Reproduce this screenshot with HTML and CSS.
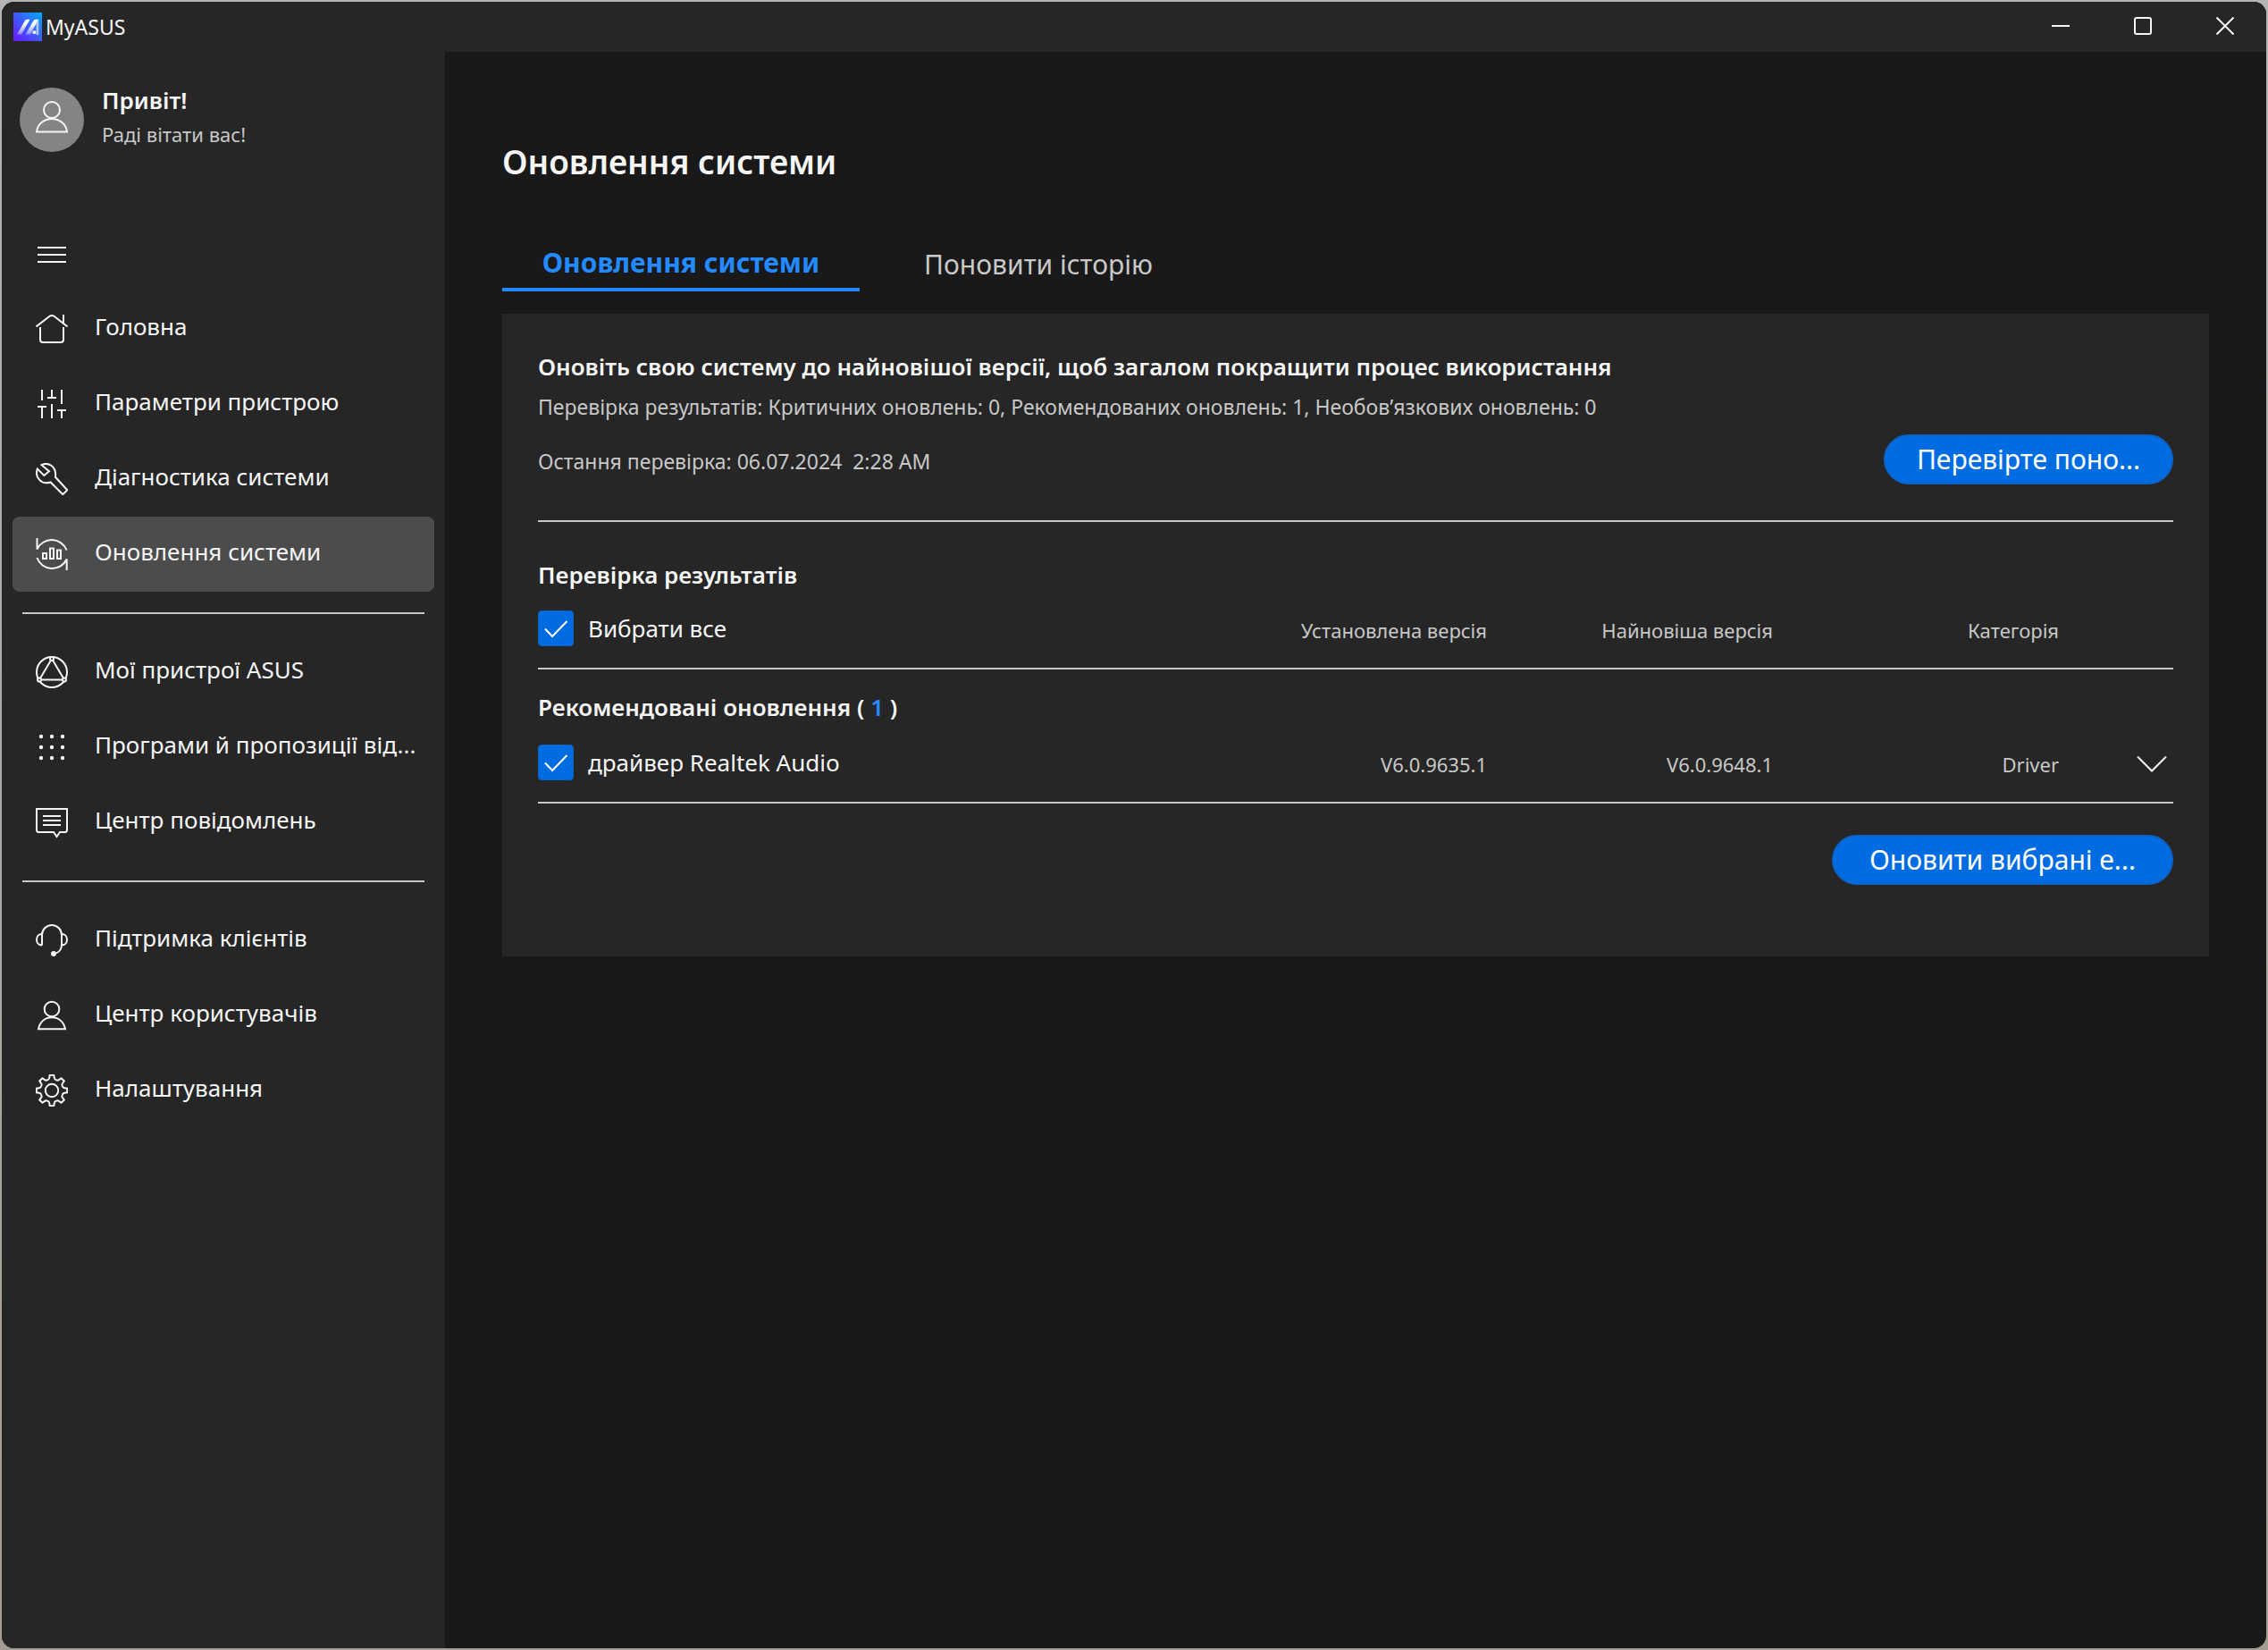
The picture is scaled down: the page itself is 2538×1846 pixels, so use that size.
FILE: index.html
```html
<!DOCTYPE html>
<html lang="uk">
<head>
<meta charset="utf-8">
<meta name="viewport" content="width=device-width, initial-scale=1">
<title>MyASUS</title>
<link rel="stylesheet" href="styles.css">
</head>
<body>
<div class="window">
  <header class="titlebar">
    <svg class="logo" viewBox="0 0 32 32" aria-hidden="true">
      <defs>
        <linearGradient id="logo-bg" x1="0" y1="1" x2="1" y2="0">
          <stop offset="0" stop-color="#6a14ff"/>
          <stop offset="0.5" stop-color="#3f5cff"/>
          <stop offset="1" stop-color="#00acff"/>
        </linearGradient>
        <linearGradient id="logo-stroke" x1="0" y1="1" x2="0" y2="0">
          <stop offset="0" stop-color="#fff" stop-opacity="0.35"/>
          <stop offset="0.7" stop-color="#fff"/>
        </linearGradient>
      </defs>
      <rect width="32" height="32" fill="url(#logo-bg)"/>
      <path d="M4 24.5 13 9Q13.800 7.700 15.200 7.700H18.500L9 24.500Z" fill="url(#logo-stroke)"/>
      <path d="M13.500 24.500 22.500 9Q23.300 7.700 24.800 7.700H28L19 24.500Z" fill="url(#logo-stroke)"/>
      <path d="M28.300 7.700V25H25.500V12.500Z" fill="#fff" fill-opacity="0.6"/>
      <circle cx="23.400" cy="22.200" r="1.900" fill="#fff"/>
    </svg>
    <span class="app-name">MyASUS</span>
    <div class="window-controls">
      <button class="window-button" type="button" aria-label="Згорнути">
        <svg class="window-icon" viewBox="0 0 20 20"><path d="M0 10H20"/></svg>
      </button>
      <button class="window-button" type="button" aria-label="Розгорнути">
        <svg class="window-icon" viewBox="0 0 20 20"><rect x="1" y="1" width="18" height="18" rx="2"/></svg>
      </button>
      <button class="window-button" type="button" aria-label="Закрити">
        <svg class="window-icon" viewBox="0 0 20 20"><path d="M.5.5 19.500 19.500M19.500.5.5 19.500"/></svg>
      </button>
    </div>
  </header>

  <div class="body">
    <aside class="sidebar">
      <div class="profile">
        <span class="avatar">
          <svg class="icon" viewBox="0 0 36 36" aria-hidden="true"><circle cx="18" cy="10" r="9"/><path d="M1 34.500C2 26 9 20 18 20S34 26 35 34.500Z"/></svg>
        </span>
        <div class="greeting">
          <p class="greeting-title">Привіт!</p>
          <p class="greeting-text">Раді вітати вас!</p>
        </div>
      </div>

      <button class="menu-button" type="button" aria-label="Меню">
        <svg class="menu-icon" viewBox="0 0 32 18"><path d="M0 1H32M0 9H32M0 17H32"/></svg>
      </button>

      <nav class="nav">
        <ul class="nav-group">
          <li><a class="nav-item" href="#home">
            <svg class="icon" viewBox="0 0 36 36"><path d="M.5 15.500 15.500 3.800Q18 2 20.500 3.800L35.500 15.500M31 2V12M5 16V30Q5 33 8 33H28Q31 33 31 30V16"/></svg>
            <span class="nav-label">Головна</span></a></li>
          <li><a class="nav-item" href="#device">
            <svg class="icon" viewBox="0 0 36 36"><path d="M7 2V14M2 21H12M7 21V34M18 2V11M13 11H23M18 18V34M29 2V18M24 25H34M29 25V34"/></svg>
            <span class="nav-label">Параметри пристрою</span></a></li>
          <li><a class="nav-item" href="#diagnostics">
            <svg class="icon" viewBox="0 0 36 36"><path d="M6.500 2.200C13-1.200 23.500 2.500 22 15.800L35.300 30.200 30.300 35.200 16.500 21.500C6.500 25-1.500 16 1.800 6.500L9.300 14 15 9.300Z"/></svg>
            <span class="nav-label">Діагностика системи</span></a></li>
          <li><a class="nav-item nav-item-active" href="#update" aria-current="page">
            <svg class="icon" viewBox="0 0 36 36"><path d="M1.500 0V12.500A18 18 0 0 1 34.600 13.500M34.700 36V23.500A18 18 0 0 1 1.400 22M8 17H12V23H8ZM16 11.500H20V23H16ZM24 13.500H28V23H24Z"/></svg>
            <span class="nav-label">Оновлення системи</span></a></li>
        </ul>
        <ul class="nav-group">
          <li><a class="nav-item" href="#devices">
            <svg class="icon" viewBox="0 0 36 36"><circle cx="18" cy="18" r="17"/><path d="M18 3 4 26.500H32Z"/><g class="node"><circle cx="18" cy="3" r="2"/><circle cx="4" cy="26.500" r="2"/><circle cx="32" cy="26.500" r="2"/></g></svg>
            <span class="nav-label">Мої пристрої ASUS</span></a></li>
          <li><a class="nav-item" href="#apps">
            <svg class="icon icon-solid" viewBox="0 0 36 36"><circle cx="6" cy="6" r="2.200"/><circle cx="18" cy="6" r="2.200"/><circle cx="30" cy="6" r="2.200"/><circle cx="6" cy="18" r="2.200"/><circle cx="18" cy="18" r="2.200"/><circle cx="30" cy="18" r="2.200"/><circle cx="6" cy="30" r="2.200"/><circle cx="18" cy="30" r="2.200"/><circle cx="30" cy="30" r="2.200"/></svg>
            <span class="nav-label">Програми й пропозиції від...</span></a></li>
          <li><a class="nav-item" href="#messages">
            <svg class="icon" viewBox="0 0 36 36"><path d="M1 3H35V26.500Q35 29 32.500 29H27L23.500 34 20 29H3.500Q1 29 1 26.500ZM8 11H28M8 16H28M8 21H28"/></svg>
            <span class="nav-label">Центр повідомлень</span></a></li>
        </ul>
        <ul class="nav-group">
          <li><a class="nav-item" href="#support">
            <svg class="icon" viewBox="0 0 36 36"><path d="M7 23.500V12A11 11 0 0 1 29 12V23C29 28 26 32 21 33M7 11C3 11 1 14 1 17.200S3 23.400 7 23.400M29 11C33 11 35 14 35 17.200S33 23.400 29 23.400"/><circle class="mic" cx="20" cy="33" r="2"/></svg>
            <span class="nav-label">Підтримка клієнтів</span></a></li>
          <li><a class="nav-item" href="#account">
            <svg class="icon" viewBox="0 0 36 36"><circle cx="18" cy="11" r="8.300"/><path d="M3 33.300C4.500 25.500 10 20.300 18 20.300S31.500 25.500 33 33.300Z"/></svg>
            <span class="nav-label">Центр користувачів</span></a></li>
          <li><a class="nav-item" href="#settings">
            <svg class="icon" viewBox="-18 -18 36 36">
              <defs><path id="tooth" d="M-4.900-11.830Q-3-12.300-2.800-14L-2.300-17.200H2.300L2.800-14Q3-12.300 4.900-11.830"/></defs>
              <use href="#tooth"/><use href="#tooth" transform="rotate(45)"/><use href="#tooth" transform="rotate(90)"/><use href="#tooth" transform="rotate(135)"/><use href="#tooth" transform="rotate(180)"/><use href="#tooth" transform="rotate(225)"/><use href="#tooth" transform="rotate(270)"/><use href="#tooth" transform="rotate(315)"/>
              <circle r="7.200"/>
            </svg>
            <span class="nav-label">Налаштування</span></a></li>
        </ul>
      </nav>
    </aside>

    <main class="main">
      <h1 class="page-title">Оновлення системи</h1>

      <div class="tabs" role="tablist">
        <button class="tab tab-active" type="button" role="tab" aria-selected="true">Оновлення системи</button>
        <button class="tab" type="button" role="tab" aria-selected="false">Поновити історію</button>
      </div>

      <section class="panel">
        <div class="summary">
          <h2 class="heading">Оновіть свою систему до найновішої версії, щоб загалом покращити процес використання</h2>
          <p class="note">Перевірка результатів: Критичних оновлень: 0, Рекомендованих оновлень: 1, Необов’язкових оновлень: 0</p>
          <div class="check-row">
            <p class="note">Остання перевірка: 06.07.2024&nbsp; 2:28 AM</p>
            <button class="primary" type="button">Перевірте поно...</button>
          </div>
        </div>

        <h2 class="heading results-heading">Перевірка результатів</h2>
        <table class="updates">
          <colgroup>
            <col>
            <col class="col-data">
            <col class="col-data">
            <col class="col-data">
            <col class="col-toggle">
          </colgroup>
          <thead>
            <tr class="row">
              <th class="cell-name" scope="col"><label class="choice"><input class="check" type="checkbox" checked>Вибрати все</label></th>
              <th class="cell-data" scope="col">Установлена версія</th>
              <th class="cell-data" scope="col">Найновіша версія</th>
              <th class="cell-data" scope="col">Категорія</th>
              <td></td>
            </tr>
          </thead>
          <tbody>
            <tr>
              <th class="group heading" scope="rowgroup" colspan="5">Рекомендовані оновлення ( <span class="count">1</span> )</th>
            </tr>
            <tr class="row">
              <th class="cell-name" scope="row"><label class="choice"><input class="check" type="checkbox" checked>драйвер Realtek Audio</label></th>
              <td class="cell-data">V6.0.9635.1</td>
              <td class="cell-data">V6.0.9648.1</td>
              <td class="cell-data">Driver</td>
              <td class="cell-toggle">
                <button class="toggle" type="button" aria-label="Докладніше">
                  <svg class="chevron" viewBox="0 0 34 20"><path d="M1 1.500 17 17.500 33 1.500"/></svg>
                </button>
              </td>
            </tr>
          </tbody>
        </table>
        <div class="actions">
          <button class="primary primary-wide" type="button">Оновити вибрані е...</button>
        </div>
      </section>
    </main>
  </div>
</div>
</body>
</html>
```
FILE: styles.css
```css
:root {
  --surface: #262626;
  --canvas: #191919;
  --selected: #4c4c4c;
  --line: #c8c8c8;
  --text: #f5f5f5;
  --muted: #c8c8c8;
  --accent: #248aff;
  --primary: #006ce2;
}

* {
  box-sizing: border-box;
}

body {
  margin: 0;
  background: linear-gradient(#b4b4b4, #a39c93);
  color: var(--text);
  font-family: "Noto Sans", "Open Sans", sans-serif;
  font-size: 26px;
  line-height: 36px;
}

h1,
h2,
p,
ul {
  margin: 0;
  padding: 0;
}

button {
  padding: 0;
  border: 0;
  background: none;
  color: inherit;
  font: inherit;
  cursor: pointer;
}

svg {
  display: block;
  flex: none;
  fill: none;
  stroke: currentColor;
  stroke-width: 2;
}

.window {
  display: flex;
  flex-direction: column;
  min-height: 100vh;
  border: 2px solid transparent;
  border-radius: 16px;
  background: var(--canvas) padding-box;
  overflow: hidden;
}

/* Title bar */

.titlebar {
  display: flex;
  align-items: center;
  gap: 4px;
  height: 56px;
  padding-left: 13px;
  background: var(--surface);
}

.logo {
  width: 32px;
  height: 32px;
  stroke: none;
}

.app-name {
  font-size: 23px;
  line-height: 30px;
}

.window-controls {
  display: flex;
  align-self: flex-start;
  margin-left: auto;
}

.window-button {
  display: grid;
  place-items: center;
  width: 92px;
  height: 54px;
}

.window-icon {
  width: 20px;
  height: 20px;
}

/* Sidebar */

.body {
  display: flex;
  flex: 1;
}

.sidebar {
  flex: none;
  width: 496px;
  padding: 36px 12px;
  background: var(--surface);
}

.profile {
  display: flex;
  align-items: center;
  gap: 20px;
  padding-left: 8px;
}

.avatar {
  display: grid;
  place-items: center;
  width: 72px;
  height: 72px;
  padding-bottom: 6px;
  border-radius: 50%;
  background: #848484;
}

.greeting {
  display: flex;
  flex-direction: column;
  gap: 5px;
  padding-bottom: 9px;
}

.greeting-title {
  font-weight: 600;
}

.greeting-text {
  color: var(--muted);
  font-size: 22px;
  line-height: 30px;
}

.menu-button {
  display: grid;
  place-items: center;
  width: 52px;
  height: 52px;
  margin: 85px 0 15px 18px;
}

.menu-icon {
  width: 32px;
  height: 18px;
}

.nav-group {
  list-style: none;
}

.nav-group + .nav-group::before {
  content: "";
  display: block;
  height: 2px;
  margin: 23px 11px;
  background: var(--line);
}

.nav-item {
  display: flex;
  align-items: center;
  gap: 30px;
  height: 84px;
  padding: 0 10px 0 26px;
  border-radius: 8px;
  color: inherit;
  text-decoration: none;
}

.nav-item-active {
  background: var(--selected);
}

.nav-label {
  padding-bottom: 6px;
  white-space: nowrap;
}

.icon {
  width: 36px;
  height: 36px;
}

.icon-solid,
.mic {
  fill: currentColor;
}

.icon-solid {
  stroke: none;
}

.node {
  fill: var(--surface);
}

/* Main area */

.main {
  flex: 1;
  min-width: 0;
  padding: 98px 64px 64px;
}

.page-title {
  font-size: 37px;
  font-weight: 600;
  line-height: 50px;
}

.tabs {
  display: flex;
  margin-top: 60px;
}

.tab {
  width: 400px;
  height: 60px;
  color: var(--muted);
  font-size: 30px;
}

.tab-active {
  border-bottom: 4px solid var(--accent);
  color: var(--accent);
  font-weight: 700;
}

.panel {
  margin-top: 25px;
  padding: 41px 40px 80px;
  background: var(--surface);
}

.heading {
  font-size: 26px;
  font-weight: 600;
  line-height: 36px;
}

.note {
  color: var(--muted);
  font-size: 23px;
  line-height: 30px;
}

.summary {
  padding-bottom: 40px;
  border-bottom: 2px solid var(--line);
}

.heading + .note {
  margin-top: 12px;
}

.check-row {
  display: flex;
  align-items: baseline;
  justify-content: space-between;
  margin-top: 16px;
}

.primary {
  width: 324px;
  height: 56px;
  border: 2px solid #0b63c4;
  border-radius: 28px;
  background: var(--primary);
  color: #fff;
  font-size: 30px;
  white-space: nowrap;
}

.primary-wide {
  width: 382px;
}

.results-heading {
  margin: 41px 0 1px;
}

/* Updates table */

.updates {
  width: 100%;
  border-spacing: 0;
  table-layout: fixed;
}

.updates th,
.updates td {
  padding: 0;
  text-align: left;
}

.col-data {
  width: 320px;
}

.col-toggle {
  width: 128px;
}

.row > * {
  height: 87px;
  border-bottom: 2px solid var(--line);
  font-weight: 400;
}

.updates .cell-name {
  padding-bottom: 3px;
}

.updates .cell-data {
  color: var(--muted);
  font-size: 22px;
  text-align: right;
}

.updates .group {
  padding: 24px 0 3px;
}

.count {
  color: var(--accent);
}

.choice {
  display: flex;
  align-items: center;
  gap: 16px;
}

.check {
  appearance: none;
  flex: none;
  width: 40px;
  height: 40px;
  margin: 0;
  border: 1px solid #0b63c4;
  border-radius: 4px;
}

.check:checked {
  background: var(--primary) url("data:image/svg+xml,%3Csvg xmlns='http://www.w3.org/2000/svg' viewBox='0 0 40 40'%3E%3Cpath d='M8 20.500 16 29 32.500 12' fill='none' stroke='white' stroke-width='2'/%3E%3C/svg%3E") center / 40px 40px;
}

.updates .cell-toggle {
  padding-right: 7px;
}

.toggle {
  display: block;
  margin-left: auto;
}

.chevron {
  width: 34px;
  height: 20px;
}

.actions {
  display: flex;
  justify-content: flex-end;
  margin-top: 35px;
}
```
